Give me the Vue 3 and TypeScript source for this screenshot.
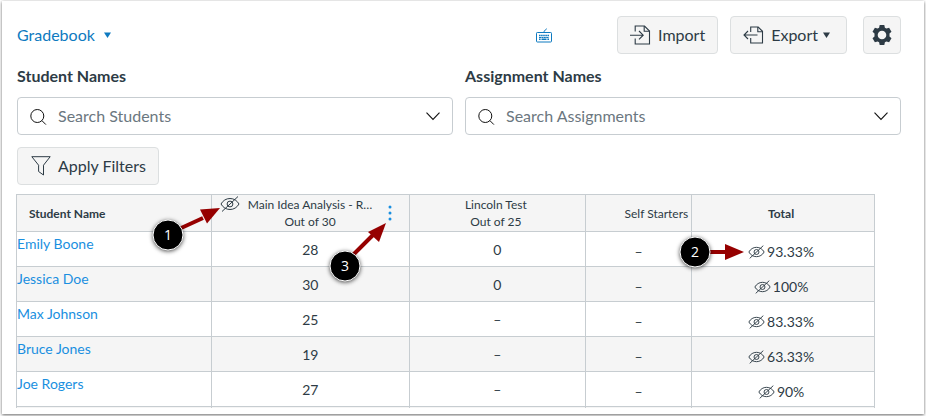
<script setup lang="ts">
import { ref } from 'vue'

interface Row {
  name: string
  idea: string
  lincoln: string
  self: string
  total: string
}

const rows: Row[] = [
  { name: 'Emily Boone', idea: '28', lincoln: '0', self: '–', total: '93.33%' },
  { name: 'Jessica Doe', idea: '30', lincoln: '0', self: '–', total: '100%' },
  { name: 'Max Johnson', idea: '25', lincoln: '–', self: '–', total: '83.33%' },
  { name: 'Bruce Jones', idea: '19', lincoln: '–', self: '–', total: '63.33%' },
  { name: 'Joe Rogers', idea: '27', lincoln: '–', self: '–', total: '90%' },
]

const searches = [
  { id: 'students', label: 'Student Names', placeholder: 'Search Students', value: ref('') },
  { id: 'assignments', label: 'Assignment Names', placeholder: 'Search Assignments', value: ref('') },
]
</script>

<template>
  <main class="panel">
    <header class="toolbar">
      <button type="button" class="view-menu">
        Gradebook
        <svg width="7" height="6" viewBox="0 0 7 6"><path d="M0 .5h7L3.500 6z" fill="currentColor" /></svg>
      </button>
      <button type="button" class="keyboard" aria-label="Keyboard shortcuts">
        <svg width="16" height="15" viewBox="0 0 16 15" fill="none" stroke="currentColor">
          <rect x=".5" y="4.500" width="15" height="9.500" rx=".8" />
          <path d="M8 4.500V3.300L10.800.7" />
          <path d="M3 7.500h10" stroke-width="1.600" stroke-dasharray="1.600 .5" />
          <path d="M3 9.500h10" stroke-width="1.200" stroke-dasharray="2 .4" />
          <path d="M3 11.300h1.600M5.500 11.300h5M11.400 11.300H13" stroke-width="1.400" />
        </svg>
      </button>
      <button type="button" class="btn">
        <svg width="21" height="20" viewBox="0 0 21 20" fill="none" stroke="currentColor" stroke-width="1.100">
          <path d="M5.200 6.500V1h9.300l5 5v13H5.200v-5.500" />
          <path d="M14.200 1v5.300h5.300" />
          <path d="M0 10.200h13M9 6l4.200 4.200L9 14.400" />
        </svg>
        Import
      </button>
      <button type="button" class="btn">
        <svg width="21" height="20" viewBox="0 0 21 20" fill="none" stroke="currentColor" stroke-width="1.100">
          <path d="M7.700 7V2h7.500l4.300 4.300V18H7.700v-5" />
          <path d="M14.800 2v4.700h4.700" />
          <path d="M14.500 10H1M5 6l-4 4 4 4" />
        </svg>
        <span class="with-caret">Export <svg width="7" height="6" viewBox="0 0 7 6"><path d="M0 .5h7L3.500 6z" fill="currentColor" /></svg></span>
      </button>
      <button type="button" class="btn square" aria-label="Gradebook settings">
        <svg width="20" height="20" viewBox="0 0 20 20" fill="currentColor" fill-rule="evenodd">
          <path d="M7.700 0h4.600l.6 2.700 1.500.9 2.700-.9 2.400 4-2 1.900v2.800l2 1.900-2.400 4-2.700-.9-1.500.9-.6 2.700H7.700l-.6-2.700-1.500-.9-2.700.9-2.400-4 2-1.900V8.600l-2-1.900 2.400-4 2.700.9 1.500-.9zM10 5.700a4.300 4.300 0 1 0 0 8.600 4.300 4.300 0 0 0 0-8.600z" />
        </svg>
      </button>
    </header>

    <section class="searches">
      <div v-for="s in searches" :key="s.id" class="field">
        <label :for="s.id">{{ s.label }}</label>
        <div class="combo">
          <svg width="17" height="17" viewBox="0 0 17 17" fill="none" stroke="#111" stroke-width="1">
            <circle cx="7.300" cy="8" r="6.500" /><path d="M11.900 12.600l4 4" />
          </svg>
          <input :id="s.id" v-model="s.value.value" type="text" role="combobox" aria-expanded="false" :placeholder="s.placeholder" />
          <svg width="14" height="9" viewBox="0 0 14 9" fill="none" stroke="#111" stroke-width="1.100"><path d="M.5.700L7 7.500 13.500.7" /></svg>
        </div>
      </div>
    </section>

    <button type="button" class="btn filters">
      <svg width="20" height="20" viewBox="0 0 20 20" fill="none" stroke="currentColor" stroke-width="1">
        <path d="M.8.700h18.400L12.500 9.200v9.800L7.600 15.500V9.200z" />
      </svg>
      Apply Filters
    </button>

    <table class="grades">
      <colgroup>
        <col class="c-name" /><col class="c-idea" /><col class="c-lincoln" /><col class="c-self" /><col class="c-total" />
      </colgroup>
      <thead>
        <tr>
          <th scope="col" class="name">Student Name</th>
          <th scope="col" class="anchor">
            <div class="assignment">
              <svg width="20" height="16" viewBox="0 0 20 16" fill="none" stroke="currentColor" stroke-width="1" role="img" aria-label="Hidden">
                <path d="M1 8c2-3.500 5.200-5.500 9-5.500S17 4.500 19 8c-2 3.500-5.200 5.500-9 5.500S3 11.500 1 8z" />
                <circle cx="10" cy="8" r="2.900" /><path d="M2 15.500L18 .5" />
              </svg>
              <div>Main Idea Analysis - R…<br />Out of 30</div>
              <button type="button" class="dots" aria-label="Main Idea Analysis options">
                <svg width="4" height="16" viewBox="0 0 4 16" fill="currentColor"><circle cx="2" cy="2" r="1.500" /><circle cx="2" cy="8" r="1.500" /><circle cx="2" cy="14" r="1.500" /></svg>
              </button>
            </div>
            <svg class="callout one" width="74" height="54" viewBox="0 0 74 54">
              <path d="M29 25L53 14" stroke="#960000" stroke-width="4" /><path d="M70 4L50 5.500l7 14z" fill="#960000" />
              <circle class="disc" cx="18" cy="31" r="15" /><text x="18" y="36">1</text>
            </svg>
            <svg class="callout three" width="66" height="68" viewBox="0 0 66 68">
              <path d="M28 35L48 15" stroke="#960000" stroke-width="4" /><path d="M61 3l-18 9 11 10z" fill="#960000" />
              <circle class="disc" cx="20" cy="46" r="15" /><text x="20" y="51">3</text>
            </svg>
          </th>
          <th scope="col">Lincoln Test<br />Out of 25</th>
          <th scope="col" class="self">Self Starters</th>
          <th scope="col" class="total">Total</th>
        </tr>
      </thead>
      <tbody>
        <tr v-for="(r, i) in rows" :key="r.name">
          <td class="name"><a href="#">{{ r.name }}</a></td>
          <td class="mid">{{ r.idea }}</td>
          <td class="mid">{{ r.lincoln }}</td>
          <td class="low">{{ r.self }}</td>
          <td class="low anchor total">
            <span class="score">
              <svg width="17" height="14" viewBox="0 0 20 16" fill="none" stroke="currentColor" stroke-width="1.100" role="img" aria-label="Hidden">
                <path d="M1 8c2-3.500 5.200-5.500 9-5.500S17 4.500 19 8c-2 3.500-5.200 5.500-9 5.500S3 11.500 1 8z" />
                <circle cx="10" cy="8" r="2.900" /><path d="M2 15.500L18 .5" />
              </svg>
              {{ r.total }}
            </span>
            <svg v-if="i === 0" class="callout two" width="74" height="44" viewBox="0 0 74 44">
              <path d="M32 20h22" stroke="#960000" stroke-width="4" /><path d="M69 20l-19-8v16z" fill="#960000" />
              <circle class="disc" cx="20" cy="20" r="15" /><text x="20" y="25">2</text>
            </svg>
          </td>
        </tr>
        <tr class="next" aria-hidden="true"><td></td><td></td><td></td><td></td><td></td></tr>
      </tbody>
    </table>
  </main>
</template>

<style>
body {
  background: #fff;
}
</style>

<style scoped>
.panel {
  box-sizing: border-box;
  margin: 1px 2px 2px;
  padding: 15px 23px 6px 15px;
  background: #fff;
  box-shadow: 0 1px 3px rgba(0, 0, 0, 0.6);
  color: #2d3b45;
  font-family: Lato, "Liberation Sans", sans-serif;
  font-size: 16px;
  line-height: 20px;
}
button,
input {
  font: inherit;
  color: inherit;
}
svg {
  flex: none;
}
.toolbar {
  display: flex;
  align-items: center;
}
.view-menu,
.keyboard,
.dots {
  display: flex;
  align-items: center;
  border: 0;
  padding: 0;
  background: none;
  color: #0e7ac0;
}
.view-menu {
  gap: 9px;
  margin-right: auto;
}
.keyboard {
  margin-right: 65px;
}
.btn {
  display: flex;
  align-items: center;
  box-sizing: border-box;
  height: 38px;
  padding: 0 12px;
  gap: 7px;
  border: 1px solid #dcdfe0;
  border-radius: 4px;
  background: #f5f5f5;
}
.toolbar .btn + .btn {
  margin-left: 12px;
}
.with-caret {
  display: flex;
  align-items: center;
  gap: 5px;
  padding-right: 4px;
}
.toolbar .btn.square {
  margin-left: 16px;
  padding: 0 8px;
}
.searches {
  display: grid;
  grid-template-columns: 1fr 1fr;
  gap: 12px;
  margin-top: 12px;
}
.field label {
  display: block;
  font-weight: 700;
}
.combo {
  display: flex;
  align-items: center;
  box-sizing: border-box;
  height: 38px;
  margin-top: 11px;
  padding: 0 12px;
  border: 1px solid #c7cdd1;
  border-radius: 4px;
}
.combo input {
  flex: 1;
  min-width: 0;
  padding: 0 11px;
  border: 0;
  outline: 0;
  background: none;
}
.combo input::placeholder {
  color: #6b7780;
  opacity: 1;
}
.filters {
  margin-top: 12px;
  padding: 0 12px 0 13px;
}
.grades {
  width: calc(100% - 25px);
  margin: 9px 0 0 -1px;
  table-layout: fixed;
  border-collapse: collapse;
  font-size: 14px;
  text-align: center;
}
.c-name { width: 22.7%; }
.c-idea { width: 23.1%; }
.c-lincoln { width: 20.5%; }
.c-self { width: 12.4%; }
.c-total { width: 21.3%; }
th,
td {
  height: 34px;
  padding: 0;
  border: 1px solid #c7cdd1;
}
th {
  height: 36px;
  background: #f5f5f5;
  font-size: 12px;
  font-weight: 400;
  line-height: 17px;
}
th:nth-child(3) {
  padding-right: 3px;
}
th.name {
  padding-left: 12px;
  text-align: left;
}
th.name,
th.total {
  font-weight: 700;
}
th.total,
td.total {
  padding-right: 4px;
}
th.self {
  padding-right: 3px;
  text-align: right;
}
tbody tr:nth-child(even) {
  background: #f5f5f5;
}
td.name {
  text-align: left;
  vertical-align: top;
  line-height: 24px;
}
td a {
  color: #1a8fe0;
  text-decoration: none;
}
td.mid,
td.low {
  box-sizing: border-box;
  padding-top: 2px;
}
td.low {
  padding-top: 6px;
}
.next td {
  height: 1px;
  border-bottom: 0;
}
.anchor {
  position: relative;
}
.assignment {
  display: flex;
  gap: 8px;
  padding: 0 17px 0 8px;
}
.assignment .dots {
  margin-left: auto;
  color: #1a8fe0;
}
.score {
  display: flex;
  align-items: center;
  justify-content: center;
  gap: 2px;
}
.callout {
  position: absolute;
  z-index: 1;
  overflow: visible;
}
.callout text {
  fill: #fff;
  font: 14px "Open Sans", sans-serif;
  text-anchor: middle;
}
.disc {
  fill: #000;
  stroke: #fff;
  stroke-width: 1;
  filter: drop-shadow(0 1px 2px rgba(0, 0, 0, 0.7));
}
.one {
  top: 9px;
  left: -62px;
}
.two {
  top: 0;
  left: -17px;
}
.three {
  top: 25px;
  right: 18px;
}
</style>
